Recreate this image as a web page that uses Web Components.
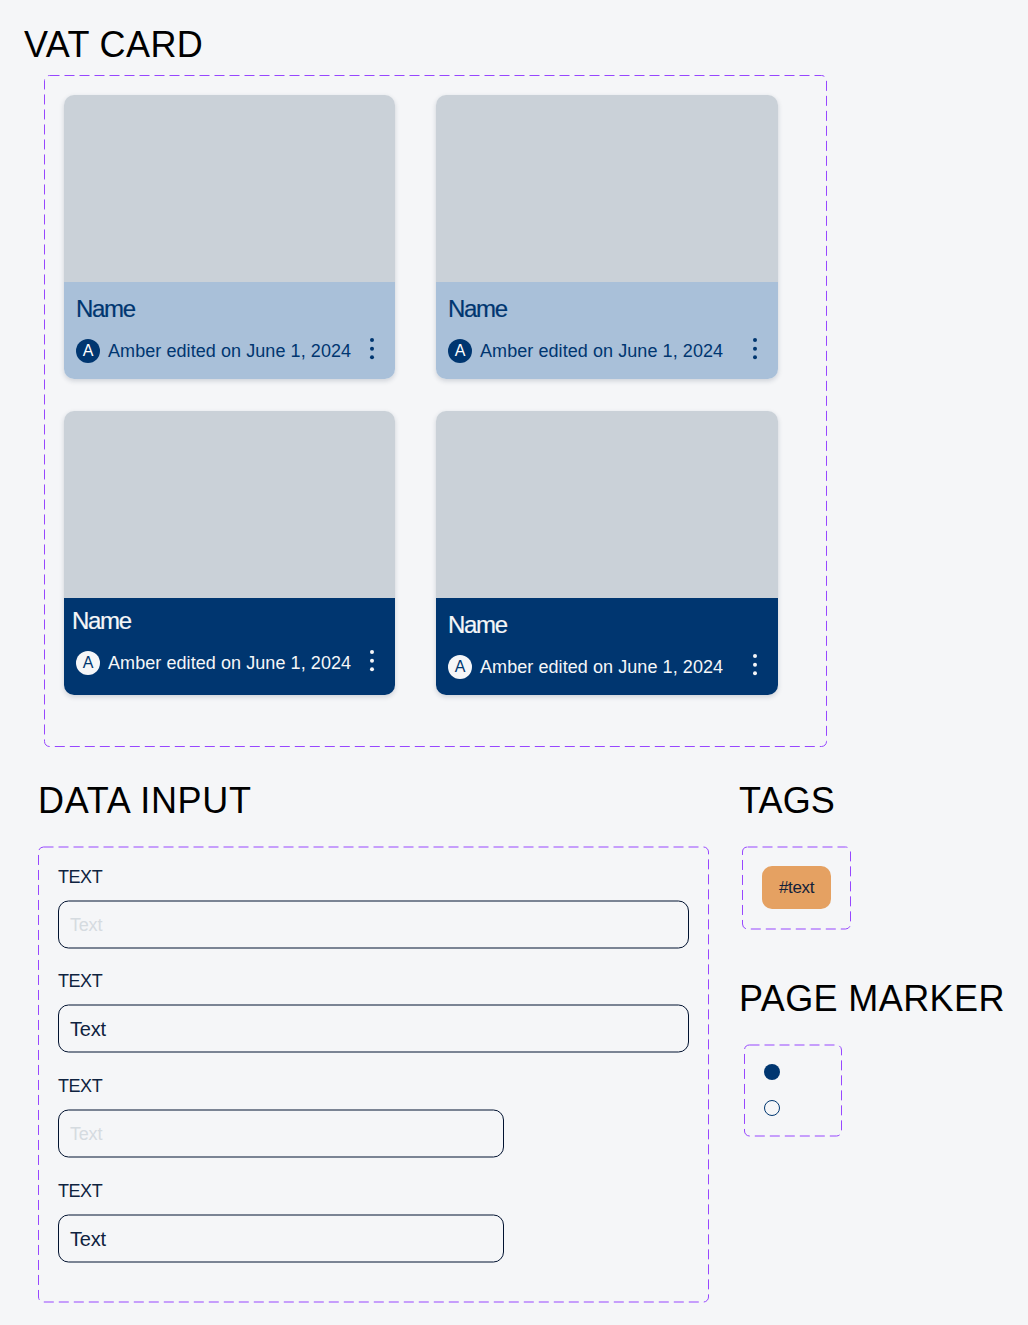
<!DOCTYPE html>
<html lang="en"><head><meta charset="utf-8"><title>Components</title>
<style>
html,body{margin:0;padding:0;background:#F5F6F8;font-family:"Liberation Sans",Arial,sans-serif}
</style></head><body>
<ui-board>
  <ui-section style="--indent:24px;--box-indent:20px;--gap:0px;--pad-top:22px;--h:53px;--ls:.4px">
    <span slot="title">VAT CARD</span>
    <dash-box style="--w:783px;--h:672px;--ry:.5px;--p:20px 0 0 20px">
      <card-grid>
        <vat-card tone="light"></vat-card>
        <vat-card tone="light"></vat-card>
        <vat-card tone="dark" style="--name-shift:-4px;--top-shift:-4px"></vat-card>
        <vat-card tone="dark"></vat-card>
      </card-grid>
    </dash-box>
  </ui-section>
  <ui-columns>
    <ui-section style="--gap:24px;--h:44px;--w:671px;--ls:.7px">
      <span slot="title">DATA INPUT</span>
      <dash-box style="--w:671px;--h:457px;--ry:1px;--p:20px 0 0 20px">
        <data-field label="TEXT" placeholder wide style="--after:21px"></data-field>
        <data-field label="TEXT" value="Text" wide style="--after:22px"></data-field>
        <data-field label="TEXT" placeholder style="--after:22px"></data-field>
        <data-field label="TEXT" value="Text"></data-field>
      </dash-box>
    </ui-section>
    <right-col>
      <ui-section style="--gap:24px;--h:44px;--box-indent:3px;--ls:.15px">
        <span slot="title">TAGS</span>
        <dash-box style="--w:109px;--h:84px;--ry:1px;--p:20px 0 0 20px"><tag-chip>#text</tag-chip></dash-box>
      </ui-section>
      <ui-section style="--gap:24px;--h:44px;--box-indent:5px;--ls:.4px">
        <span slot="title">PAGE MARKER</span>
        <dash-box style="--w:98px;--h:93px;--ry:1px;--p:20px 0 0 20px"><page-marker></page-marker><page-marker hollow></page-marker></dash-box>
      </ui-section>
    </right-col>
  </ui-columns>
</ui-board>
<script>
function def(name, html){
  customElements.define(name, class extends HTMLElement{
    constructor(){super();const r=this.attachShadow({mode:'open'});r.innerHTML=typeof html==='function'?html(this):html;}
  });
}
def('ui-board',`<style>:host{display:flex;flex-direction:column;width:1028px;height:1325px;overflow:hidden;background:#F5F6F8;color:#000}</style><slot></slot>`);
def('ui-section',`<style>
:host{display:block;padding-left:var(--indent,0);padding-top:var(--pad-top,0);width:var(--w,auto)}
.t{display:block;font-size:36px;line-height:46px;height:var(--h);letter-spacing:var(--ls,.1px);margin-bottom:var(--gap);white-space:nowrap;color:#000}
.b{margin-left:var(--box-indent,0)}
</style><div class="t"><slot name="title"></slot></div><div class="b"><slot></slot></div>`);
def('ui-columns',`<style>:host{display:flex;margin:31px 0 0 38px;gap:30px}</style><slot></slot>`);
def('right-col',`<style>:host{display:flex;flex-direction:column;gap:46px}</style><slot></slot>`);
def('dash-box',`<style>
:host{display:block;position:relative;box-sizing:border-box;width:var(--w);height:var(--h);padding:var(--p)}
svg{position:absolute;inset:0;width:100%;height:100%;overflow:visible;pointer-events:none}
rect{x:.5px;y:var(--ry);width:calc(100% - 1px);height:calc(100% - 2*var(--ry));fill:none;stroke:#9747FF;stroke-width:1;stroke-dasharray:10 5}
</style><svg aria-hidden="true"><rect rx="5" ry="5"></rect></svg><slot></slot>`);
def('card-grid',`<style>:host{display:grid;grid-template-columns:331px 342px;grid-template-rows:284px 284px;column-gap:41px;row-gap:32px}</style><slot></slot>`);
def('vat-card',`<style>
:host{display:flex;flex-direction:column;border-radius:10px;overflow:hidden;box-shadow:0 2px 5px rgba(30,45,70,.18);--bg:#A9C0D9;--fg:#003670;--av:#003670;--avfg:#fff}
:host([tone=dark]){--bg:#003670;--fg:#F5F6F8;--av:#F5F6F8;--avfg:#003670}
.img{height:187px;background:#CAD1D8}
.foot{height:97px;box-sizing:border-box;background:var(--bg);color:var(--fg);padding:calc(13px + var(--top-shift,0px)) 15px 0 12px}
.name{font-size:24px;line-height:28px;letter-spacing:-1.3px;margin-left:var(--name-shift,0);-webkit-text-stroke:.2px currentColor}
.row{display:flex;align-items:center;margin-top:16px;height:24px;font-size:18px;letter-spacing:.07px;white-space:nowrap}
.a{width:24px;height:24px;border-radius:50%;background:var(--av);color:var(--avfg);display:flex;align-items:center;justify-content:center;font-size:16px;margin-right:8px;flex:none}
.k{margin-left:auto;width:16px;height:24px;flex:none;overflow:visible}
.k circle{fill:var(--fg)}
</style><div class="img"></div><div class="foot"><div class="name">Name</div><div class="row"><span class="a">A</span><span class="tx">Amber edited on June 1, 2024</span><svg class="k" viewBox="0 0 16 24" aria-hidden="true"><circle cx="8" cy="1" r="2"/><circle cx="8" cy="9.7" r="2"/><circle cx="8" cy="18.3" r="2"/></svg></div></div>`);
def('data-field',el=>{
  const w=el.hasAttribute('wide')?631:446;
  const ph=el.hasAttribute('placeholder');
  const txt=ph?'Text':el.getAttribute('value');
  return `<style>
:host{display:block;width:${w}px;margin-bottom:var(--after,0);color:#0F2340}
.l{font-size:18px;line-height:22px;height:22px;letter-spacing:-.45px}
.i{position:relative;box-sizing:border-box;height:49px;margin-top:12px;padding:2px 0 0 12px;display:flex;align-items:center}
svg{position:absolute;inset:0;width:100%;height:100%;overflow:visible}
rect{x:.5px;y:1px;width:calc(100% - 1px);height:calc(100% - 2px);fill:none;stroke:#011230;stroke-width:1}
.v{font-size:20px;letter-spacing:-.2px}.p{font-size:18px;letter-spacing:-.2px;color:#D5DBE0}
</style><div class="l">${el.getAttribute('label')}</div><div class="i"><svg aria-hidden="true"><rect rx="10" ry="10"></rect></svg><span class="${ph?'p':'v'}">${txt}</span></div>`;
});
def('tag-chip',`<style>:host{display:flex;align-items:center;justify-content:center;width:69px;height:43px;box-sizing:border-box;border-radius:10px;background:#E5A162;color:#13213A;font-size:17px;letter-spacing:-.35px}</style><slot></slot>`);
def('page-marker',`<style>:host{display:block;box-sizing:border-box;width:16px;height:16px;border-radius:50%;background:#003670;margin-bottom:20px}
:host([hollow]){background:transparent;border:1px solid #003670;margin-bottom:0}</style>`);
</script>
</body></html>
